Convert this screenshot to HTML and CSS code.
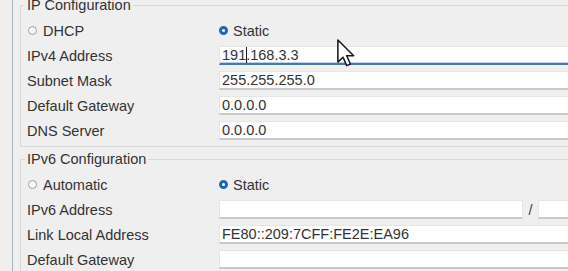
FILE: index.html
```html
<!DOCTYPE html>
<html>
<head>
<meta charset="utf-8">
<link rel="stylesheet" href="styles.css">
</head>
<body>
<div class="frame">
  <div class="panel">
    <fieldset class="group">
      <legend>IP Configuration</legend>
      <div class="row">
        <div class="label"><span class="radio"></span>DHCP</div>
        <div class="opt"><span class="radio on"></span>Static</div>
      </div>
      <div class="row">
        <div class="label">IPv4 Address</div>
        <div class="field focus">191<span class="caret"></span>.168.3.3</div>
      </div>
      <div class="row">
        <div class="label">Subnet Mask</div>
        <div class="field">255.255.255.0</div>
      </div>
      <div class="row">
        <div class="label">Default Gateway</div>
        <div class="field">0.0.0.0</div>
      </div>
      <div class="row">
        <div class="label">DNS Server</div>
        <div class="field">0.0.0.0</div>
      </div>
    </fieldset>
    <fieldset class="group second">
      <legend>IPv6 Configuration</legend>
      <div class="row">
        <div class="label"><span class="radio"></span>Automatic</div>
        <div class="opt"><span class="radio on"></span>Static</div>
      </div>
      <div class="row">
        <div class="label">IPv6 Address</div>
        <div class="split">
          <div class="field addr"></div>
          <span class="slash">/</span>
          <div class="field prefix"></div>
        </div>
      </div>
      <div class="row">
        <div class="label">Link Local Address</div>
        <div class="field">FE80::209:7CFF:FE2E:EA96</div>
      </div>
      <div class="row">
        <div class="label">Default Gateway</div>
        <div class="field"></div>
      </div>
    </fieldset>
  </div>
</div>
<svg class="pointer" width="20" height="28" viewBox="0 0 13 20">
  <path d="M0.7 0.7 L0.7 16.5 L4.4 13 L7 19 L9.6 17.9 L7 12 L12 12 Z" fill="#ffffff" stroke="#1a1a1a" stroke-width="1.1" stroke-linejoin="round"/>
</svg>
</body>
</html>
```

FILE: styles.css
```css
html, body {
  margin: 0;
  padding: 0;
}
body {
  background: #efefef;
  font-family: "Liberation Sans", Arial, sans-serif;
  font-size: 14.5px;
  color: #333333;
  overflow: hidden;
  width: 568px;
  height: 271px;
  position: relative;
}
.frame {
  padding-left: 12px;
}
.panel {
  border-left: 1px solid #aab5be;
  padding-left: 7px;
}
.group {
  margin: -3px 0 0 0;
  padding: 5px 0 3px 4px;
  border: 1px solid #d9d9d9;
  border-right: none;
  min-width: 0;
}
.group.second {
  margin-top: 4px;
}
.group legend {
  padding: 0 2px;
  line-height: 16px;
  height: 16px;
  color: #333333;
}
.row {
  display: flex;
  align-items: center;
  height: 25px;
  padding-left: 2px;
}
.label {
  width: 192px;
  flex: none;
  display: flex;
  align-items: center;
}
.opt {
  display: flex;
  align-items: center;
}
.radio {
  display: inline-block;
  box-sizing: border-box;
  width: 9px;
  height: 9px;
  border: 1px solid #a0a0a0;
  border-radius: 50%;
  background: #f7f7f7;
  margin: 0 6px 0 1px;
}
.radio.on {
  border: 3px solid #2166b0;
  background: #ffffff;
  margin-left: 0;
  margin-right: 5px;
  width: 9px;
  height: 9px;
}
.field {
  box-sizing: border-box;
  height: 19px;
  flex: 1;
  min-width: 0;
  background: #ffffff;
  border: 1px solid #e6e6e6;
  border-right: none;
  border-bottom: 2px solid #c9c9c9;
  padding: 0 2px;
  line-height: 16px;
  white-space: nowrap;
  overflow: hidden;
}
.field.focus {
  border-bottom: 2px solid #4b78a8;
  box-shadow: inset 0 -1px 0 #b9d4ec;
}
.caret {
  display: inline-block;
  width: 0;
  height: 16px;
  border-left: 1px solid #222222;
  vertical-align: top;
  margin-right: -1px;
}
.split {
  flex: 1;
  display: flex;
  align-items: center;
}
.field.addr {
  flex: none;
  width: 304px;
  border-right: 1px solid #e6e6e6;
}
.slash {
  width: 15px;
  text-align: center;
  color: #444444;
}
.field.prefix {
  flex: 1;
}
.pointer {
  position: absolute;
  left: 336px;
  top: 39px;
}
```
